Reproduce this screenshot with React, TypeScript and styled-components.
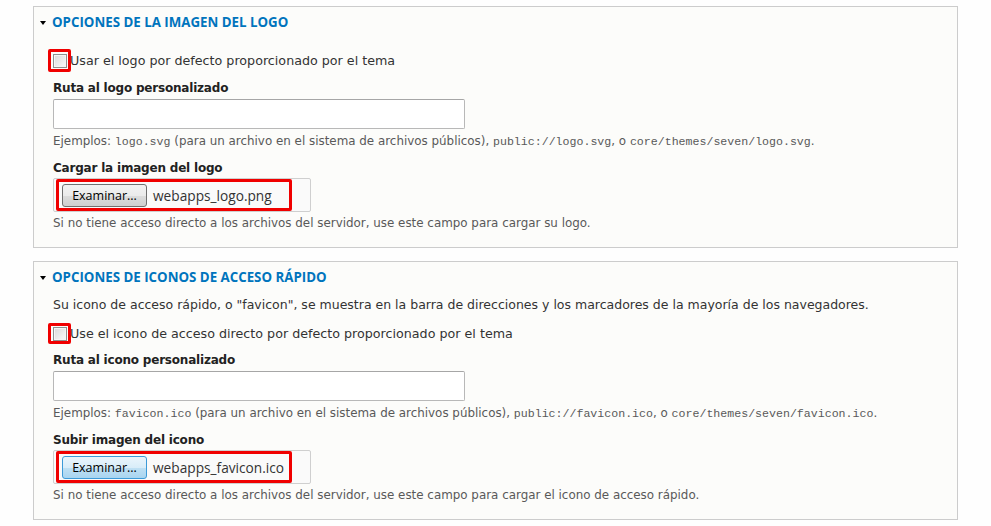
import React from "react"
import styled, { createGlobalStyle } from "styled-components"

const GlobalStyle = createGlobalStyle`
    html, body {
        margin: 0;
        padding: 0;
        background: #fefefe;
    }
    body {
        font-family: "DejaVu Sans", Verdana, sans-serif;
        color: #333;
    }
`

const Page = styled.div`
    display: flex;
    flex-direction: column;
    gap: 13px;
    padding: 6px 33px 8px 33px;
    width: 925px;
`

const Panel = styled.fieldset`
    margin: 0;
    padding: 6px 19px 16px 19px;
    border: 1px solid #cccccc;
    background: #fcfcfa;
    min-width: 0;
`

const Summary = styled.div`
    display: flex;
    align-items: center;
    height: 18px;
    margin-left: -13px;
    gap: 6px;
`

const Caret = styled.span`
    width: 0;
    height: 0;
    border-left: 3.5px solid transparent;
    border-right: 3.5px solid transparent;
    border-top: 4px solid #000;
    margin-top: 1px;
`

const Title = styled.span`
    font-family: "Open Sans", sans-serif;
    font-weight: 700;
    font-size: 13.3px;
    color: #0074bd;
    text-transform: uppercase;
`

const Intro = styled.p<{ $top: number }>`
    margin: ${p => p.$top}px 0 0 0;
    font-size: 12.5px;
    line-height: 16px;
    color: #333;
`

const CheckRow = styled.label<{ $top: number }>`
    display: flex;
    align-items: center;
    margin: ${p => p.$top}px 0 0 -5px;
    font-size: 12.7px;
    color: #333;
`

const Highlight = styled.span`
    display: inline-flex;
    align-items: center;
    border: 3px solid #f00000;
    border-radius: 2px;
    box-sizing: border-box;
`

const CheckHighlight = styled(Highlight)<{ $h: number }>`
    width: 23px;
    height: ${p => p.$h}px;
    justify-content: center;
`

const Box = styled.span`
    display: block;
    width: 12px;
    height: 12px;
    border: 1px solid #8e8f8f;
    background: linear-gradient(135deg, #d9d9d9 0%, #f4f4f4 80%);
    box-shadow: inset 0 0 0 1px #f5f5f5;
`

const CheckText = styled.span`
    margin-left: -1px;
`

const Label = styled.div<{ $top: number }>`
    margin-top: ${p => p.$top}px;
    font-weight: 700;
    font-size: 12px;
    letter-spacing: -0.2px;
    line-height: 17px;
    color: #222;
`

const TextInput = styled.div`
    margin-top: 2px;
    width: 412px;
    height: 30px;
    box-sizing: border-box;
    border: 1px solid #b8b8b8;
    border-top-color: #a6a6a6;
    border-radius: 2px;
    background: #fff;
`

const Description = styled.div<{ $top: number }>`
    margin-top: ${p => p.$top}px;
    font-size: 11.9px;
    line-height: 16px;
    color: #595959;
`

const Code = styled.code`
    font-family: "Liberation Mono", "Courier New", monospace;
    font-size: 11.6px;
`

const FileBox = styled.div`
    margin-top: 1px;
    display: flex;
    align-items: center;
    width: 258px;
    height: 34px;
    box-sizing: border-box;
    border: 1px solid #cfcfcf;
    border-radius: 2px;
    background: #fafafa;
    padding-left: 2px;
`

const FileHighlight = styled(Highlight)`
    width: 236px;
    height: 32px;
    padding: 0 0 0 3px;
    gap: 6px;
    white-space: nowrap;
`

const BrowseButton = styled.span<{ $focus?: boolean }>`
    display: inline-flex;
    align-items: center;
    justify-content: center;
    width: 85px;
    height: 23px;
    box-sizing: border-box;
    border: 1px solid ${p => (p.$focus ? "#3c9ad8" : "#707070")};
    border-radius: 3px;
    background: ${p =>
        p.$focus
            ? "linear-gradient(#eaf5fc 0%, #d9edf9 50%, #bfe0f4 51%, #a9d5f0 100%)"
            : "linear-gradient(#f2f2f2 0%, #ebebeb 50%, #dddddd 51%, #cfcfcf 100%)"};
    font-family: "Open Sans", sans-serif;
    font-size: 12.5px;
    color: #000;
`

const FileName = styled.span`
    font-family: "Open Sans", sans-serif;
    font-size: 13.7px;
    color: #333;
`

interface SectionProps {
    title: string
    intro?: string
    checkLabel: string
    pathLabel: string
    exampleFile: string
    uploadLabel: string
    fileName: string
    focus?: boolean
    help: string
}

const Section = ({ title, intro, checkLabel, pathLabel, exampleFile, uploadLabel, fileName, focus, help }: SectionProps) => (
    <Panel>
        <Summary>
            <Caret />
            <Title>{title}</Title>
        </Summary>
        {intro && <Intro $top={11}>{intro}</Intro>}
        <CheckRow $top={intro ? 10 : 18}>
            <CheckHighlight $h={intro ? 21 : 23}>
                <Box />
            </CheckHighlight>
            <CheckText>{checkLabel}</CheckText>
        </CheckRow>
        <Label $top={8}>{pathLabel}</Label>
        <TextInput />
        <Description $top={4}>
            Ejemplos: <Code>{exampleFile}</Code> (para un archivo en el sistema de archivos públicos),{" "}
            <Code>public://{exampleFile}</Code>, o <Code>core/themes/seven/{exampleFile}</Code>.
        </Description>
        <Label $top={10}>{uploadLabel}</Label>
        <FileBox>
            <FileHighlight>
                <BrowseButton $focus={focus}>Examinar...</BrowseButton>
                <FileName>{fileName}</FileName>
            </FileHighlight>
        </FileBox>
        <Description $top={3}>{help}</Description>
    </Panel>
)

export default function App() {
    return (
        <>
            <GlobalStyle />
            <Page>
                <Section
                    title="Opciones de la imagen del logo"
                    checkLabel="Usar el logo por defecto proporcionado por el tema"
                    pathLabel="Ruta al logo personalizado"
                    exampleFile="logo.svg"
                    uploadLabel="Cargar la imagen del logo"
                    fileName="webapps_logo.png"
                    help="Si no tiene acceso directo a los archivos del servidor, use este campo para cargar su logo."
                />
                <Section
                    title="Opciones de iconos de acceso rápido"
                    intro={'Su icono de acceso rápido, o "favicon", se muestra en la barra de direcciones y los marcadores de la mayoría de los navegadores.'}
                    checkLabel="Use el icono de acceso directo por defecto proporcionado por el tema"
                    pathLabel="Ruta al icono personalizado"
                    exampleFile="favicon.ico"
                    uploadLabel="Subir imagen del icono"
                    fileName="webapps_favicon.ico"
                    focus
                    help="Si no tiene acceso directo a los archivos del servidor, use este campo para cargar el icono de acceso rápido."
                />
            </Page>
        </>
    )
}
